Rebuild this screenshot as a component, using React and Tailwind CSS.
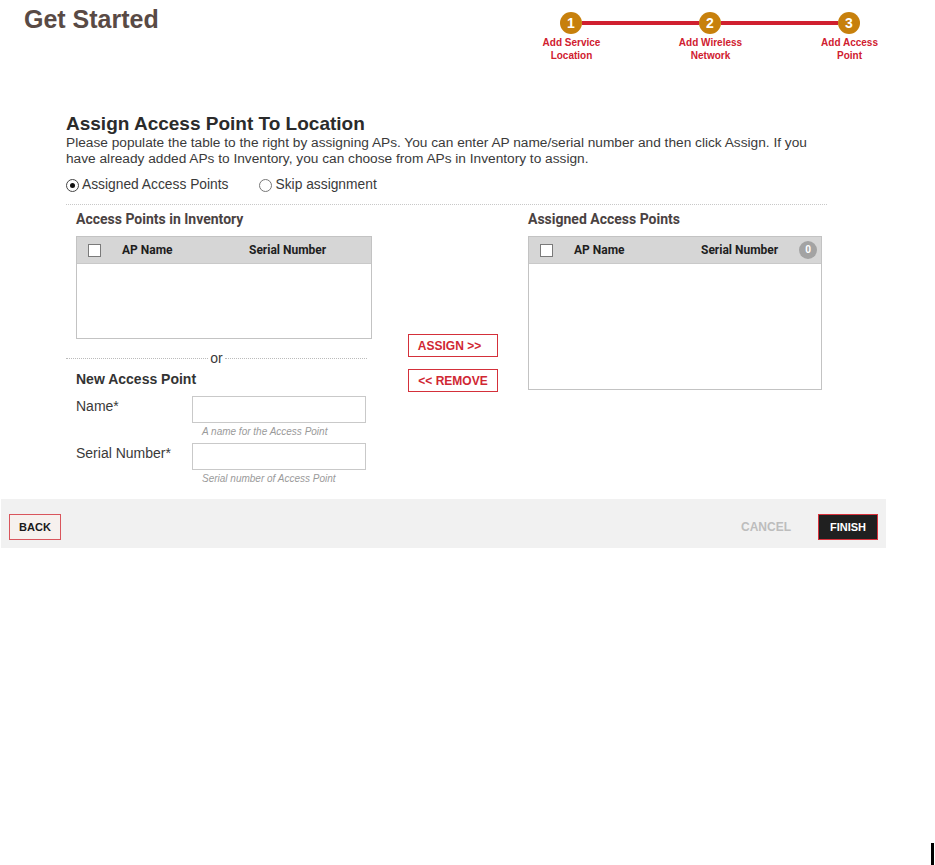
import React from 'react';

const steps = [
  { n: '1', l1: 'Add Service', l2: 'Location' },
  { n: '2', l1: 'Add Wireless', l2: 'Network' },
  { n: '3', l1: 'Add Access', l2: 'Point' },
];

function StepCircle({ n }) {
  return (
    <div className="w-[22px] h-[22px] rounded-full bg-[#c7800c] text-white text-[14px] font-bold leading-[22px] text-center shrink-0">
      {n}
    </div>
  );
}

function Stepper() {
  return (
    <div className="pt-[12px]">
      <div className="flex items-center pl-[58px]">
        <StepCircle n="1" />
        <div className="w-[117px] h-[4px] bg-[#d0202f]" />
        <StepCircle n="2" />
        <div className="w-[117px] h-[4px] bg-[#d0202f]" />
        <StepCircle n="3" />
      </div>
      <div className="flex mt-[2px]">
        {steps.map((s) => (
          <div key={s.n} className="w-[139px] text-center text-[10px] leading-[13px] font-bold text-[#d0202f]">
            <div>{s.l1}</div>
            <div>{s.l2}</div>
          </div>
        ))}
      </div>
    </div>
  );
}

function Radio({ checked, label }) {
  return (
    <label className="flex items-center gap-[3px]">
      <span
        className={
          checked
            ? 'w-[13px] h-[13px] rounded-full border border-[#444] bg-white flex items-center justify-center'
            : 'w-[13px] h-[13px] rounded-full border border-[#777] bg-white'
        }
      >
        {checked && <span className="w-[5px] h-[5px] rounded-full bg-[#111]" />}
      </span>
      <span>{label}</span>
    </label>
  );
}

function Checkbox() {
  return <div className="w-[13px] h-[13px] border border-[#7a7a7a] bg-white shrink-0" />;
}

function ApTable({ height, badge }) {
  return (
    <div className={`border border-[#c3c3c3] bg-white ${height}`}>
      <div className="h-[27px] bg-[#d6d6d6] border-b border-[#c9c9c9] flex items-center pl-[11px] pr-[4px] font-['Roboto',sans-serif] text-[12px] font-bold text-[#1e1e1e]">
        <Checkbox />
        <div className="w-[148px] pl-[21px]">AP Name</div>
        <div className="flex-1">Serial Number</div>
        {badge && (
          <div className="w-[18px] h-[18px] rounded-full bg-[#a3a3a3] text-white text-[10px] leading-[18px] text-center">
            0
          </div>
        )}
      </div>
    </div>
  );
}

function Field({ label, hint, mt }) {
  return (
    <div className={mt}>
      <div className="flex">
        <div className="w-[126px] pl-[10px] pt-[2px] leading-[16px]">{label}</div>
        <div className="w-[174px] h-[27px] border border-[#c9c9c9] bg-white" />
      </div>
      <div className="mt-[3px] pl-[136px] text-[10px] leading-[12px] italic text-[#9a9a9a]">{hint}</div>
    </div>
  );
}

export default function App() {
  return (
    <div className="relative min-h-[865px] bg-white font-['Liberation_Sans',Arial,sans-serif] text-[14px] text-[#3a3a3a]">
      <div className="flex items-start">
        <div className="w-[502px] pl-[24px] pt-[5px] text-[25px] leading-[28px] font-bold text-[#594a45]">
          Get Started
        </div>
        <Stepper />
      </div>

      <div className="ml-[66px] w-[761px] mt-[52px]">
        <h2 className="text-[19px] leading-[20px] font-bold text-[#2b2b2b]">Assign Access Point To Location</h2>
        <p className="mt-[1px] text-[13.7px] leading-[16px]">
          Please populate the table to the right by assigning APs. You can enter AP name/serial number and then click
          Assign. If you have already added APs to Inventory, you can choose from APs in Inventory to assign.
        </p>
        <div className="flex items-center gap-[31px] mt-[10px] text-[13.8px] leading-[16px]">
          <Radio checked label="Assigned Access Points" />
          <Radio label="Skip assignment" />
        </div>
        <div className="mt-[11px] border-t border-dotted border-[#c8c8c8]" />

        <div className="flex items-start">
          <div className="w-[306px]">
            <div className="mt-[6px] pl-[10px] font-['Roboto',sans-serif] font-bold text-[14px] leading-[16px] text-[#4a4242]">
              Access Points in Inventory
            </div>
            <div className="mt-[9px] ml-[10px]">
              <ApTable height="h-[103px]" />
            </div>
            <div className="mt-[11px] w-[301px] flex items-center leading-[16px]">
              <div className="flex-1 border-t border-dotted border-[#bbb]" />
              <span className="px-[2px]">or</span>
              <div className="flex-1 border-t border-dotted border-[#bbb]" />
            </div>
            <div className="mt-[5px] pl-[10px] font-bold leading-[16px] text-[#333]">New Access Point</div>
            <Field mt="mt-[9px]" label="Name*" hint="A name for the Access Point" />
            <Field mt="mt-[5px]" label="Serial Number*" hint="Serial number of Access Point" />
          </div>

          <div className="ml-[36px] mt-[129px] flex flex-col gap-[12px]">
            <button className="w-[90px] h-[23px] border border-[#d4303a] bg-white text-[12px] font-bold text-[#d02733] pr-[7px]">
              ASSIGN &gt;&gt;
            </button>
            <button className="w-[90px] h-[23px] border border-[#d4303a] bg-white text-[12px] font-bold text-[#d02733]">
              &lt;&lt; REMOVE
            </button>
          </div>

          <div className="ml-[30px] w-[294px]">
            <div className="mt-[6px] font-['Roboto',sans-serif] font-bold text-[14px] leading-[16px] text-[#4a4242]">
              Assigned Access Points
            </div>
            <div className="mt-[9px]">
              <ApTable height="h-[154px]" badge />
            </div>
          </div>
        </div>
      </div>

      <div className="mt-[14px] ml-[1px] w-[885px] bg-[#f1f1f1] flex items-center pt-[15px] pb-[8px] pl-[8px] pr-[8px]">
        <button className="w-[52px] h-[26px] border border-[#d9555c] bg-[#f6f1ee] text-[11px] font-bold text-[#1a1a1a]">
          BACK
        </button>
        <span className="ml-auto text-[12px] font-bold text-[#bdbdbd]">CANCEL</span>
        <button className="ml-[27px] w-[60px] h-[26px] border border-[#d9323c] bg-[#202020] text-[11px] font-bold text-white">
          FINISH
        </button>
      </div>

      <div className="absolute left-[931px] top-[843px] w-[3px] h-[22px] bg-black" />
    </div>
  );
}
